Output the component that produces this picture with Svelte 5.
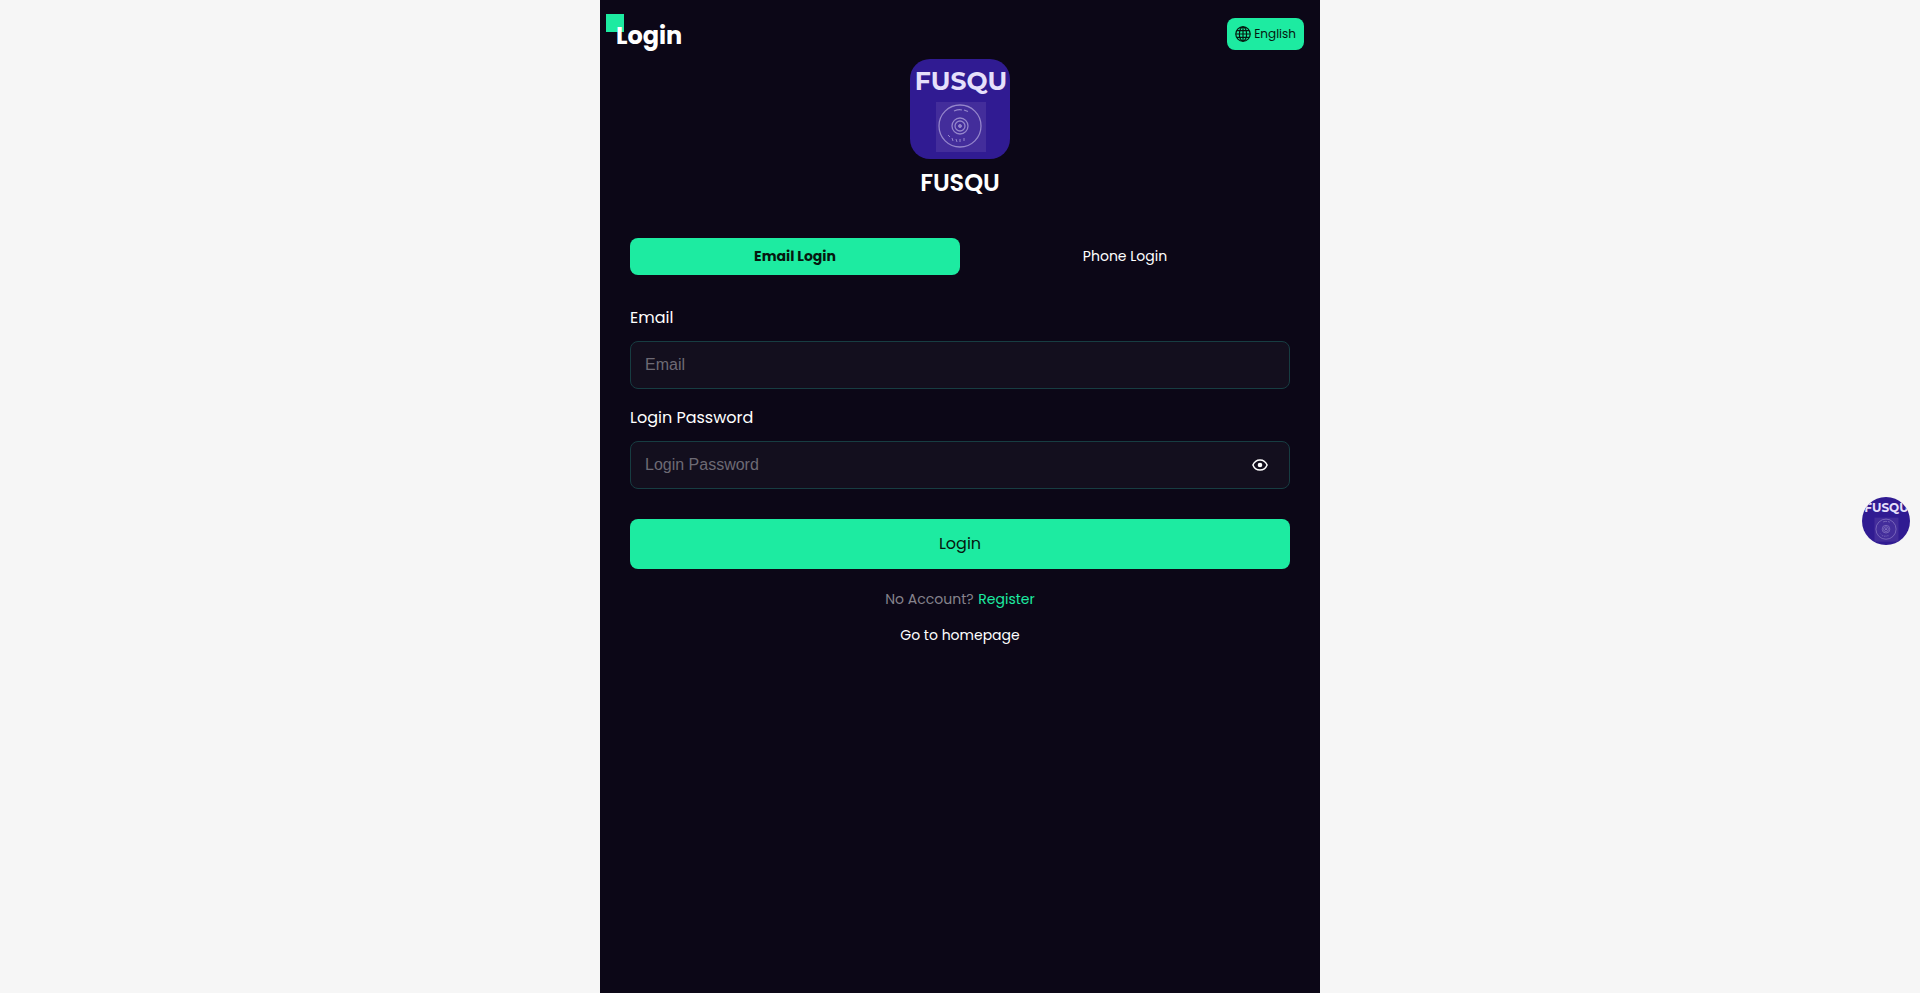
<script lang="ts">
	let mode = $state("email");
	let account = $state("");
	let password = $state("");
	let visible = $state(false);

	let accountLabel = $derived(mode === "email" ? "Email" : "Phone");

	function submit(e: Event) {
		e.preventDefault();
	}
</script>

<svelte:head>
	<title>Login</title>
</svelte:head>

{#snippet logo()}
	<svg class="logo" viewBox="0 0 100 100" aria-hidden="true">
		<rect width="100" height="100" fill="#301b92" />
		<text x="51" y="31" text-anchor="middle" font-size="25" font-weight="700" fill="#e6e0fb">FUSQU</text>
		<rect x="26" y="43" width="50" height="50" fill="#432d9b" />
		<g fill="none" stroke="#9485cb">
			<circle cx="50" cy="67" r="21" stroke-width="1.3" />
			<circle cx="50" cy="67" r="8" stroke-width="1.3" />
			<circle cx="50" cy="67" r="5" stroke-width="1.3" />
			<circle cx="50" cy="67" r="1.5" fill="#9485cb" />
			<path d="M44 52q5-2 8-1M54 51l4 1.500" stroke-width="1.3" />
			<path d="M38 76l2 2M42 79l1 3M46 80l1 3M50 80v3M54 79v3" stroke-width="1" />
		</g>
	</svg>
{/snippet}

<div class="page">
	<header>
		<h1>Login</h1>
		<button class="lang" type="button">
			<svg viewBox="0 0 16 16" width="16" height="16" fill="none" stroke="currentColor" stroke-width="1.2" aria-hidden="true">
				<circle cx="8" cy="8" r="7.2" />
				<ellipse cx="8" cy="8" rx="3.6" ry="7.2" />
				<path d="M8 .8v14.4M.8 8h14.4M2 4.6h12M2 11.4h12" />
			</svg>
			English
		</button>
	</header>

	<div class="brand">
		<div class="brand-logo">{@render logo()}</div>
		<h2>FUSQU</h2>
	</div>

	<main>
		<div class="tabs">
			<button type="button" class:active={mode === "email"} onclick={() => (mode = "email")}>Email Login</button>
			<button type="button" class:active={mode === "phone"} onclick={() => (mode = "phone")}>Phone Login</button>
		</div>

		<form onsubmit={submit}>
			<label for="account">{accountLabel}</label>
			<div class="field">
				<input id="account" type="text" placeholder={accountLabel} bind:value={account} />
			</div>

			<label for="password">Login Password</label>
			<div class="field">
				<input
					id="password"
					type={visible ? "text" : "password"}
					placeholder="Login Password"
					bind:value={password}
				/>
				<button class="eye" type="button" aria-label="Show password" onclick={() => (visible = !visible)}>
					<svg viewBox="0 0 16 12" width="16" height="12" aria-hidden="true">
						<path
							d="M.9 6C2.3 2.6 5 .9 8 .9S13.7 2.6 15.1 6C13.7 9.4 11 11.1 8 11.1S2.3 9.4.9 6z"
							fill="none"
							stroke="currentColor"
							stroke-width="1.5"
						/>
						<circle cx="8" cy="6" r="2.3" fill="currentColor" />
					</svg>
				</button>
			</div>

			<button class="submit" type="submit">Login</button>
		</form>

		<p class="register">No Account? <a href="#register">Register</a></p>
		<p><a class="home" href="#home">Go to homepage</a></p>
	</main>
</div>

<button class="float" type="button" aria-label="FUSQU">{@render logo()}</button>

<style>
	:global(body) {
		background: #f6f6f6;
	}

	.page {
		box-sizing: border-box;
		max-width: 720px;
		min-height: 100vh;
		margin: 0 auto;
		background: #0c0717;
		color: #fff;
		font-family: Poppins, Inter, sans-serif;
	}

	button {
		border: 0;
		padding: 0;
		background: none;
		color: inherit;
		font-family: inherit;
		cursor: pointer;
	}

	header {
		display: flex;
		justify-content: space-between;
		align-items: flex-start;
		padding: 18px 16px 5px;
	}

	h1 {
		position: relative;
		z-index: 0;
		margin: 0;
		font-size: 24px;
		line-height: 36px;
		font-weight: 700;
	}

	/* green square behind the title */
	h1::before {
		content: "";
		position: absolute;
		z-index: -1;
		top: -4px;
		left: -10px;
		width: 18px;
		height: 18px;
		background: #1deba1;
	}

	.lang {
		display: flex;
		align-items: center;
		gap: 3px;
		height: 32px;
		padding: 0 8px;
		border-radius: 8px;
		background: #1deba1;
		color: #06180f;
		font-size: 12px;
	}

	.logo {
		display: block;
		width: 100%;
		font-family: Montserrat, Inter, sans-serif;
	}

	.brand-logo {
		width: 100px;
		margin: 0 auto;
		border-radius: 20px;
		overflow: hidden;
	}

	.brand {
		text-align: center;
	}

	h2 {
		margin: 6px 0 37px;
		font-size: 24px;
		line-height: 36px;
		font-weight: 600;
	}

	main {
		padding: 0 30px;
	}

	.tabs {
		display: flex;
		margin-bottom: 31px;
	}

	.tabs button {
		flex: 1;
		height: 37px;
		border-radius: 8px;
		font-size: 14px;
	}

	.tabs .active {
		background: #1deba1;
		color: #06180f;
		font-weight: 700;
	}

	label {
		display: block;
		margin-bottom: 11px;
		font-size: 16px;
		line-height: 24px;
	}

	.field {
		display: flex;
		align-items: center;
		box-sizing: border-box;
		height: 48px;
		margin-bottom: 17px;
		border: 1px solid #173d42;
		border-radius: 8px;
		background: #130f1e;
	}

	.field input {
		flex: 1;
		min-width: 0;
		height: 100%;
		box-sizing: border-box;
		padding: 0 14px;
		border: 0;
		outline: 0;
		background: none;
		color: #fff;
		font-family: "Liberation Sans", Arial, sans-serif;
		font-size: 16px;
	}

	.field input::placeholder {
		color: #6d6a74;
	}

	.eye {
		display: flex;
		padding: 8px;
		margin-right: 13px;
	}

	.submit {
		width: 100%;
		height: 50px;
		margin-top: 13px;
		padding-bottom: 2px;
		border-radius: 8px;
		background: #1deba1;
		color: #06180f;
		font-size: 16px;
	}

	p {
		margin: 15px 0;
		font-size: 14px;
		line-height: 21px;
		text-align: center;
	}

	form + p {
		margin-top: 20px;
	}

	.register {
		color: #86838d;
	}

	a {
		color: #1deba1;
		text-decoration: none;
	}

	.register a {
		margin-left: 1px;
	}

	.home {
		color: #fff;
	}

	.float {
		position: fixed;
		top: 50%;
		right: 10px;
		width: 48px;
		height: 48px;
		border-radius: 50%;
		overflow: hidden;
	}
</style>
